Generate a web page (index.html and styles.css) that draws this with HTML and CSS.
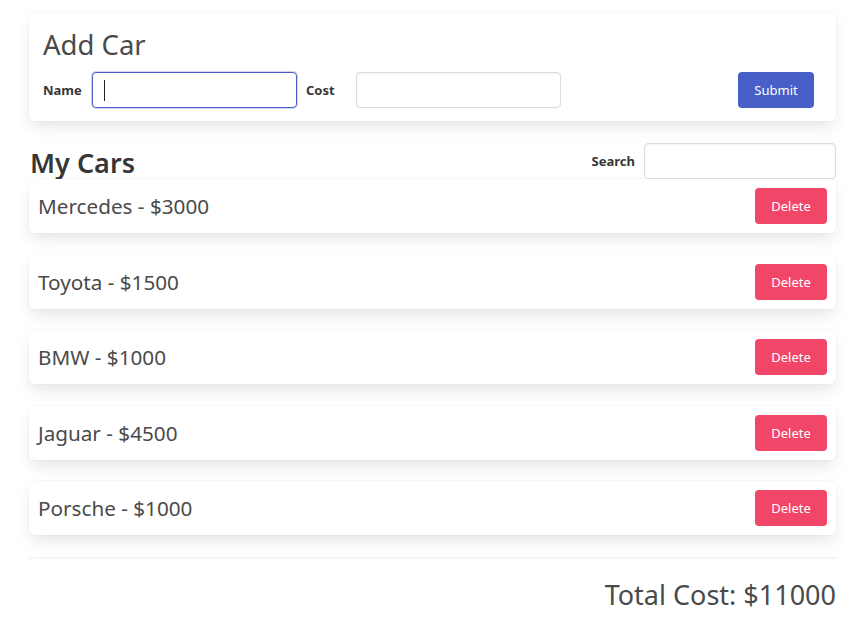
FILE: index.html
```html
<!DOCTYPE html>
<html>
<head>
<meta charset="utf-8">
<link rel="stylesheet" href="styles.css">
</head>
<body>
<div class="container">
  <div class="box add-box">
    <h1 class="title">Add Car</h1>
    <div class="form-row">
      <label class="label">Name</label>
      <div class="input focused"><span class="caret"></span></div>
      <label class="label cost-label">Cost</label>
      <div class="input"></div>
      <div class="spacer"></div>
      <button class="btn btn-link">Submit</button>
    </div>
  </div>

  <div class="list-head">
    <h2 class="subtitle">My Cars</h2>
    <div class="search">
      <label class="label">Search</label>
      <div class="input search-input"></div>
    </div>
  </div>

  <div class="list">
    <div class="box item"><span class="item-text">Mercedes - $3000</span><button class="btn btn-danger">Delete</button></div>
    <div class="box item"><span class="item-text">Toyota - $1500</span><button class="btn btn-danger">Delete</button></div>
    <div class="box item"><span class="item-text">BMW - $1000</span><button class="btn btn-danger">Delete</button></div>
    <div class="box item"><span class="item-text">Jaguar - $4500</span><button class="btn btn-danger">Delete</button></div>
    <div class="box item"><span class="item-text">Porsche - $1000</span><button class="btn btn-danger">Delete</button></div>
  </div>

  <hr class="divider">
  <div class="total">Total Cost: $11000</div>
</div>
</body>
</html>
```

FILE: styles.css
```css
* { box-sizing: border-box; }
body {
  margin: 0;
  background: #fff;
  font-family: "Noto Sans", "Open Sans", sans-serif;
  color: #4a4a4a;
}
.container {
  width: 807px;
  margin-left: 29px;
  padding-top: 12px;
}
.box {
  background: #fff;
  border-radius: 6px;
  box-shadow: 0 8px 16px -2px rgba(10,10,10,0.1), 0 0 0 1px rgba(10,10,10,0.02);
}
.add-box {
  padding: 15px 22px 13px 14px;
}
.title {
  margin: 0 0 9px 0;
  font-size: 27.5px;
  font-weight: 400;
  line-height: 36px;
  color: #4a4a4a;
}
.form-row {
  display: flex;
  align-items: center;
}
.label {
  font-size: 13px;
  font-weight: 700;
  color: #363636;
}
.form-row .label { width: 49px; }
.form-row .cost-label { width: 50px; margin-left: 9px; }
.input {
  width: 205px;
  height: 36px;
  border: 1px solid #dbdbdb;
  border-radius: 4px;
  background: #fff;
  box-shadow: inset 0 1px 2px rgba(10,10,10,0.05);
  position: relative;
}
.input.focused {
  border-color: #485fc7;
  box-shadow: 0 0 0 1px rgba(72,95,199,0.25);
}
.caret {
  position: absolute;
  left: 11px;
  top: 7px;
  width: 1px;
  height: 21px;
  background: #222;
}
.spacer { flex: 1; }
.btn {
  height: 36px;
  border: none;
  border-radius: 4px;
  color: #fff;
  font-family: inherit;
  font-size: 13px;
  padding: 0 10px;
}
.btn-link { background: #485fc7; width: 76px; }
.btn-danger { background: #f14668; width: 72px; }

.list-head {
  display: flex;
  justify-content: space-between;
  align-items: flex-end;
  margin-top: 22px;
  height: 36px;
}
.subtitle {
  margin: 0 0 1px 1px;
  font-size: 27px;
  font-weight: 600;
  color: #363636;
  line-height: 30px;
}
.search {
  display: flex;
  align-items: center;
  height: 36px;
}
.search .label { margin-right: 9px; }
.search-input { width: 192px; }

.list {
  display: flex;
  flex-direction: column;
  gap: 21.5px;
}
.item {
  height: 54px;
  display: flex;
  align-items: center;
  justify-content: space-between;
  padding: 0 9px;
}
.item-text {
  font-size: 20.7px;
}
.divider {
  margin: 22px 0 0 0;
  border: none;
  height: 2px;
  background: #f5f5f5;
}
.total {
  text-align: right;
  font-size: 27px;
  margin-top: 18px;
  line-height: 36px;
}
```
